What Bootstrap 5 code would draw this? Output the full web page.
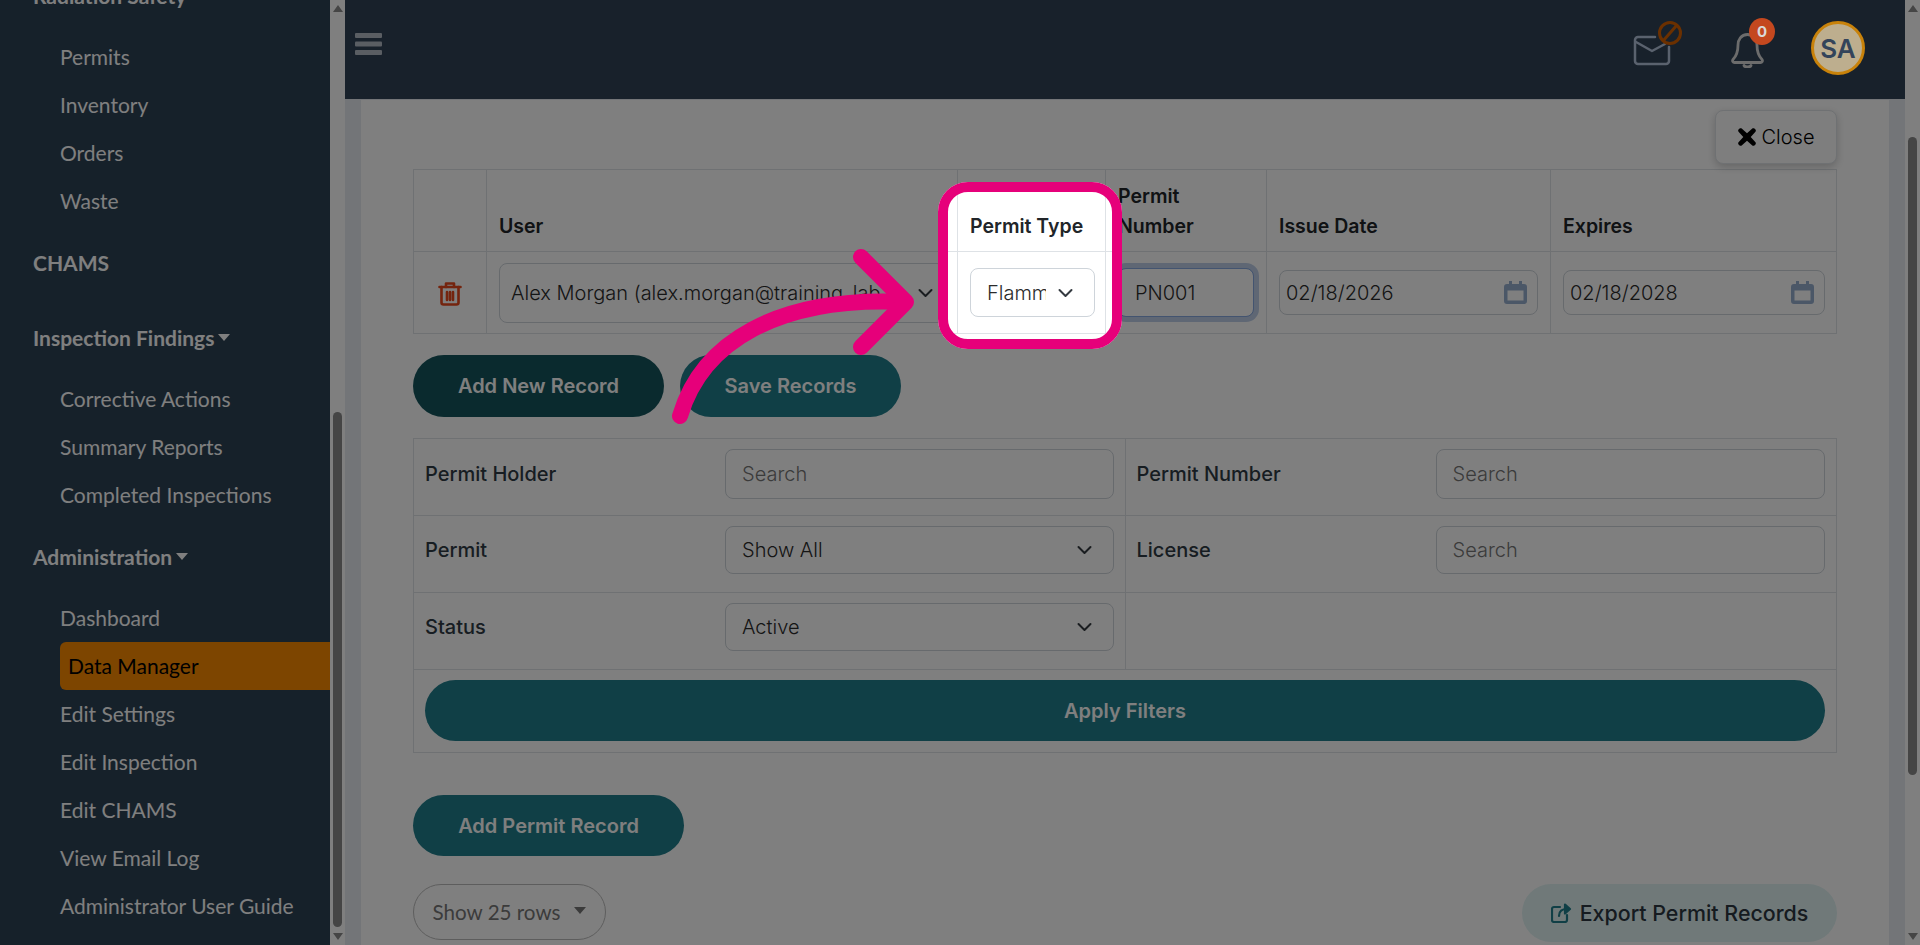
<!DOCTYPE html>
<html lang="en">
<head>
  <meta charset="UTF-8">
  <title>Permit Records</title>
  <link rel="stylesheet" href="https://cdn.jsdelivr.net/npm/bootstrap@5.3.3/dist/css/bootstrap.min.css">
  <style>
    html, body { height: 100%; overflow: hidden; }
    body { font-family: "Inter", "Liberation Sans", sans-serif; background: #fff; color: #333; }
    .shell { height: 945px; }

    /* sidebar */
    .side-col { width: 330px; background: #2c4254; font-family: "Lato", "Liberation Sans", sans-serif; overflow: hidden; flex-shrink: 0; }
    .side-list { margin-top: -28px; }
    .side-head { display: block; height: 48px; line-height: 48px; padding-left: 33px; font-size: 21px; font-weight: 700; color: #fff; text-decoration: none; }
    .side-head.dropdown-toggle::after { margin-left: 4px; border-top-width: 7px; border-right-width: 6px; border-left-width: 6px; }
    .side-sub { margin: 13px 0 14px; padding: 0; list-style: none; }
    .side-gap { height: 27px; }
    .side-sub a { display: block; height: 48px; line-height: 48px; margin-left: 60px; padding-left: 0; font-size: 21px; color: #fff; text-decoration: none; }
    .side-sub a.on { background: #fa8a00; color: #000; padding-left: 8px; border-radius: 6px 0 0 6px; }

    /* fake scrollbars */
    .bar-rail { width: 15px; background: #fff; flex-shrink: 0; }
    .bar-up { width: 0; height: 0; margin: 5px auto 0; border: 5px solid transparent; border-top: 0; border-bottom: 7px solid #8a8a8a; }
    .bar-down { width: 0; height: 0; margin: 0 auto 5px; border: 5px solid transparent; border-bottom: 0; border-top: 7px solid #8a8a8a; }
    .bar-thumb { width: 9px; margin: 0 auto; background: #8a8a8a; border-radius: 5px; }
    .thumb-side { height: 515px; margin-top: 400px; }
    .thumb-page { height: 638px; margin-top: 125px; }

    /* header */
    .top-bar { height: 100px; background: #304256; border-bottom: 1px solid #e6eaf0; padding: 0 40px 3px 10px; flex-shrink: 0; }
    .burger { margin-bottom: 8px; }
    .mail-ico { margin-bottom: 8px; margin-right: 46px; }
    .bell-wrap { position: relative; width: 33px; height: 35px; margin-top: 5px; margin-right: 47px; }
    .bell-count { position: absolute; z-index: 20; left: 18px; top: -15px; width: 26px; height: 27px; border-radius: 50%; background: #c4481f; color: #d9d9d9; font-size: 15px; font-weight: 700; line-height: 27px; text-align: center; }
    .avatar-dot { position: relative; z-index: 20; width: 54px; height: 54px; border-radius: 50%; border: 3px solid #c8820a; background: #bdae8e; color: #33445a; font-size: 26px; font-weight: 600; display: flex; align-items: center; justify-content: center; }

    /* main */
    .page-wrap { background: #e6eaf0; padding: 0 16px; overflow: hidden; }
    .sheet { background: #fff; height: 100%; padding: 10px 52px 0; }
    .close-btn { height: 54px; width: 122px; margin-bottom: 5px; background: #fcfcfc; border: 1px solid #dee2e6; border-radius: 8px; box-shadow: 0 3px 8px rgba(0,0,0,.2); font-size: 20px; font-weight: 300; color: #000; display: flex; align-items: center; justify-content: center; gap: 6px; }

    .grid-tbl { table-layout: fixed; margin-bottom: 0; border-color: #dee2e6; }
    .grid-tbl > :not(caption) > * > * { padding: 0 12px; }
    .grid-tbl th { height: 82px; vertical-align: bottom; padding-bottom: 10px !important; font-size: 19.5px; line-height: 30px; font-weight: 600; color: #212529; }
    .grid-tbl td { height: 82px; vertical-align: middle; }
    .w-del { width: 73px; }
    .w-user { width: 471px; }
    .w-type { width: 148px; }
    .w-num { width: 161px; }
    .w-date { width: 284px; }

    .soft-ctl { font-size: 20px; font-weight: 300; color: #2b2b2b; border-color: #ced4da; border-radius: 8px; box-shadow: none; }
    .soft-ctl::placeholder { color: #777; }
    select.soft-ctl { background-size: 21px 16px; background-position: right 18px center; padding-left: 16px; padding-right: 48px; }
    .ctl-user { height: 60px; padding-left: 11px !important; background-position: right 8px center !important; padding-right: 40px !important; }
    .ctl-type { height: 49px; width: calc(100% + 2px); }
    .ctl-num { height: 49px; padding-left: 16px; border-color: #86a8e0; box-shadow: 0 0 0 5px #bfcfe8; }
    .ctl-date { height: 45px; padding: 0 10px 0 6px; display: flex; align-items: center; justify-content: space-between; }
    .ctl-last { width: calc(100% + 1px); }

    .pill-btn { height: 62px; border: 0; border-radius: 31px; color: #fff; font-size: 20px; font-weight: 600; background: #207e8c; }
    .pill-dark { background: #14545c; width: 251px; }
    .pill-save { width: 221px; }
    .pill-add { width: 271px; height: 61px; margin-top: 42px; margin-bottom: 28px; display: block; }
    .act-row { margin: 21px 0 21px; gap: 16px; }

    .find-tbl > :not(caption) > * > * { padding: 0 11px; }
    .find-tbl td { vertical-align: top; height: 77px; padding-top: 10px !important; }
    .find-tbl label { width: 300px; flex-shrink: 0; font-size: 20px; font-weight: 500; color: #2f3a44; }
    .find-tbl .soft-ctl { height: 48px; }
    .find-tbl input.soft-ctl { padding-left: 16px; }
    .find-tbl .tall { height: 50px; }
    .find-tbl label.lab-r { width: 299px; }
    .find-tbl td.go-cell { height: 83px; }
    .pill-apply { width: 100%; height: 61px; }

    .rows-btn { width: 193px; height: 56px; border: 1px solid #bbb; border-radius: 28px; background: #fff; font-family: "Lato", sans-serif; font-size: 20.600px; color: #777; padding: 0; }
    .rows-btn::after { margin-left: 14px; border-top-width: 7px; border-right-width: 6px; border-left-width: 6px; }
    .export-btn { width: 315px; height: 58px; border: 0; border-radius: 29px; background: #e0f3f3; color: #2c3640; font-size: 21.400px; font-weight: 500; display: flex; align-items: center; justify-content: center; gap: 8px; }

    /* tutorial spotlight */
    .spot-box { position: absolute; z-index: 10; left: 938px; top: 182px; width: 184px; height: 167px; border: 10px solid #e6007a; border-radius: 30px; box-shadow: 0 0 0 3000px rgba(0,0,0,.5); pointer-events: none; }
    .spot-arrow { position: absolute; z-index: 11; left: 660px; top: 240px; pointer-events: none; }
  </style>
</head>
<body>

<div class="shell d-flex">
  <nav class="side-col">
    <div class="side-list">
      <a class="side-head dropdown-toggle" href="#">Radiation Safety</a>
      <ul class="side-sub">
        <li><a href="#">Permits</a></li>
        <li><a href="#">Inventory</a></li>
        <li><a href="#">Orders</a></li>
        <li><a href="#">Waste</a></li>
      </ul>
      <a class="side-head" href="#">CHAMS</a>
      <div class="side-gap"></div>
      <a class="side-head dropdown-toggle" href="#">Inspection Findings</a>
      <ul class="side-sub">
        <li><a href="#">Corrective Actions</a></li>
        <li><a href="#">Summary Reports</a></li>
        <li><a href="#">Completed Inspections</a></li>
      </ul>
      <a class="side-head dropdown-toggle" href="#">Administration</a>
      <ul class="side-sub">
        <li><a href="#">Dashboard</a></li>
        <li><a class="on" href="#">Data Manager</a></li>
        <li><a href="#">Edit Settings</a></li>
        <li><a href="#">Edit Inspection</a></li>
        <li><a href="#">Edit CHAMS</a></li>
        <li><a href="#">View Email Log</a></li>
        <li><a href="#">Administrator User Guide</a></li>
      </ul>
    </div>
  </nav>
  <div class="bar-rail d-flex flex-column">
    <div class="bar-up"></div>
    <div class="bar-thumb thumb-side"></div>
    <div class="bar-down mt-auto"></div>
  </div>

  <div class="flex-grow-1 d-flex flex-column" style="min-width:0">
    <header class="top-bar d-flex align-items-center">
      <svg class="burger" width="27" height="22" viewBox="0 0 27 22" fill="#b4bcc6"><rect width="27" height="5" rx="1"/><rect y="8.5" width="27" height="5" rx="1"/><rect y="17" width="27" height="5" rx="1"/></svg>
      <div class="ms-auto d-flex align-items-center">
        <svg class="mail-ico" width="55" height="48" viewBox="0 0 55 48" fill="none">
          <path d="M25 17H8a3 3 0 0 0-3 3v21a3 3 0 0 0 3 3h28a3 3 0 0 0 3-3V27" stroke="#b4c4dc" stroke-width="2.5" stroke-linecap="round"/>
          <path d="M6 22l16 9 13-7" stroke="#b4c4dc" stroke-width="2.5" stroke-linecap="round" stroke-linejoin="round"/>
          <circle cx="40" cy="13" r="10.5" stroke="#d76000" stroke-width="3"/>
          <path d="M33 21L47 5" stroke="#d76000" stroke-width="3"/>
        </svg>
        <div class="bell-wrap">
          <svg width="33" height="35" viewBox="0 0 33 35" fill="none" stroke="#d8d8d8" stroke-width="2.800" stroke-linejoin="round">
            <path d="M16.5 1.5C10 1.5 7 7 7 12c0 7-1.5 11-5 14.500-1 1.500 0 3 1.500 3h26c1.500 0 2.500-1.500 1.500-3-3.500-3.500-5-7.500-5-14.500 0-5-3-10.500-9.500-10.500z"/>
            <path d="M13 32.500c1 2 6 2 7 0" stroke-linecap="round"/>
          </svg>
          <span class="bell-count">0</span>
        </div>
        <div class="avatar-dot">SA</div>
      </div>
    </header>

    <div class="page-wrap flex-grow-1">
      <main class="sheet">
        <div class="d-flex justify-content-end">
          <button class="close-btn" type="button">
            <svg width="18" height="18" viewBox="0 0 17 17" fill="#000"><path d="M3.500 0.500L8.500 5 13.500 0.500c.6-.5 1.400-.5 2 0l1 1c.5.600.5 1.400 0 2L12 8.500l4.500 5c.5.600.5 1.400 0 2l-1 1c-.6.5-1.400.5-2 0L8.500 12l-5 4.500c-.6.5-1.400.5-2 0l-1-1c-.5-.6-.5-1.400 0-2L5 8.500 .5 3.500c-.5-.6-.5-1.400 0-2l1-1c.6-.5 1.400-.5 2 0z"/></svg>
            Close
          </button>
        </div>

        <table class="table table-bordered grid-tbl">
          <colgroup>
            <col class="w-del"><col class="w-user"><col class="w-type"><col class="w-num"><col class="w-date"><col>
          </colgroup>
          <thead>
            <tr>
              <th></th>
              <th>User</th>
              <th>Permit Type</th>
              <th>Permit<br>Number</th>
              <th>Issue Date</th>
              <th>Expires</th>
            </tr>
          </thead>
          <tbody>
            <tr>
              <td class="text-center">
                <svg width="24" height="25" viewBox="0 0 24 25" fill="none" stroke="#e8481c" stroke-width="2.600" stroke-linecap="round" stroke-linejoin="round">
                  <path d="M1.500 6h21"/><path d="M8 6V2.500h8V6"/><path d="M3.500 6v15.500a2 2 0 0 0 2 2h13a2 2 0 0 0 2-2V6"/><path d="M9 11v8M15 11v8M12 11v8"/>
                </svg>
              </td>
              <td><select class="form-select soft-ctl ctl-user"><option>Alex Morgan (alex.morgan@training_lab.com)</option></select></td>
              <td><select class="form-select soft-ctl ctl-type"><option>Flammable</option></select></td>
              <td><input class="form-control soft-ctl ctl-num" type="text" value="PN001"></td>
              <td>
                <div class="form-control soft-ctl ctl-date"><span>02/18/2026</span>
                  <svg width="23" height="23" viewBox="0 0 23 23" fill="#96aecf"><path fill-rule="evenodd" d="M5 0h3v3h7V0h3v3h2a3 3 0 0 1 3 3v14a3 3 0 0 1-3 3H3a3 3 0 0 1-3-3V6a3 3 0 0 1 3-3h2zM3.500 9.500v10h16v-10z"/></svg>
                </div>
              </td>
              <td>
                <div class="form-control soft-ctl ctl-date ctl-last"><span>02/18/2028</span>
                  <svg width="23" height="23" viewBox="0 0 23 23" fill="#96aecf"><path fill-rule="evenodd" d="M5 0h3v3h7V0h3v3h2a3 3 0 0 1 3 3v14a3 3 0 0 1-3 3H3a3 3 0 0 1-3-3V6a3 3 0 0 1 3-3h2zM3.500 9.500v10h16v-10z"/></svg>
                </div>
              </td>
            </tr>
          </tbody>
        </table>

        <div class="d-flex act-row">
          <button class="pill-btn pill-dark" type="button">Add New Record</button>
          <button class="pill-btn pill-save" type="button">Save Records</button>
        </div>

        <table class="table table-bordered grid-tbl find-tbl">
          <tbody>
            <tr>
              <td><div class="d-flex align-items-center"><label>Permit Holder</label><input class="form-control soft-ctl tall" placeholder="Search"></div></td>
              <td><div class="d-flex align-items-center"><label class="lab-r">Permit Number</label><input class="form-control soft-ctl tall" placeholder="Search"></div></td>
            </tr>
            <tr>
              <td><div class="d-flex align-items-center"><label>Permit</label><select class="form-select soft-ctl"><option>Show All</option></select></div></td>
              <td><div class="d-flex align-items-center"><label class="lab-r">License</label><input class="form-control soft-ctl" placeholder="Search"></div></td>
            </tr>
            <tr>
              <td><div class="d-flex align-items-center"><label>Status</label><select class="form-select soft-ctl"><option>Active</option></select></div></td>
              <td></td>
            </tr>
            <tr>
              <td colspan="2" class="go-cell"><button class="pill-btn pill-apply" type="button">Apply Filters</button></td>
            </tr>
          </tbody>
        </table>

        <button class="pill-btn pill-add" type="button">Add Permit Record</button>

        <div class="d-flex justify-content-between align-items-start">
          <button class="rows-btn dropdown-toggle" type="button">Show 25 rows</button>
          <button class="export-btn" type="button">
            <svg width="21" height="20" viewBox="0 0 21 20" fill="none" stroke="#207e8c" stroke-width="2.200" stroke-linecap="round" stroke-linejoin="round">
              <path d="M9 4H3a2 2 0 0 0-2 2v11a2 2 0 0 0 2 2h11a2 2 0 0 0 2-2v-5"/>
              <path d="M8 13c0-5 3-7 8-7" /><path d="M14 1.500L19 6l-5 4.500z" fill="#207e8c"/>
            </svg>
            Export Permit Records
          </button>
        </div>
      </main>
    </div>
  </div>

  <div class="bar-rail d-flex flex-column">
    <div class="bar-up"></div>
    <div class="bar-thumb thumb-page"></div>
    <div class="bar-down mt-auto"></div>
  </div>
</div>

<div class="spot-box"></div>
<svg class="spot-arrow" width="270" height="200" viewBox="660 240 270 200" fill="none" stroke="#e6007a" stroke-width="16" stroke-linecap="round" stroke-linejoin="round">
  <path d="M680 416C702 342 778 296 905 302"/>
  <path d="M861 257L906 302 861 347"/>
</svg>

<script src="https://cdn.jsdelivr.net/npm/bootstrap@5.3.3/dist/js/bootstrap.bundle.min.js"></script>
</body>
</html>
